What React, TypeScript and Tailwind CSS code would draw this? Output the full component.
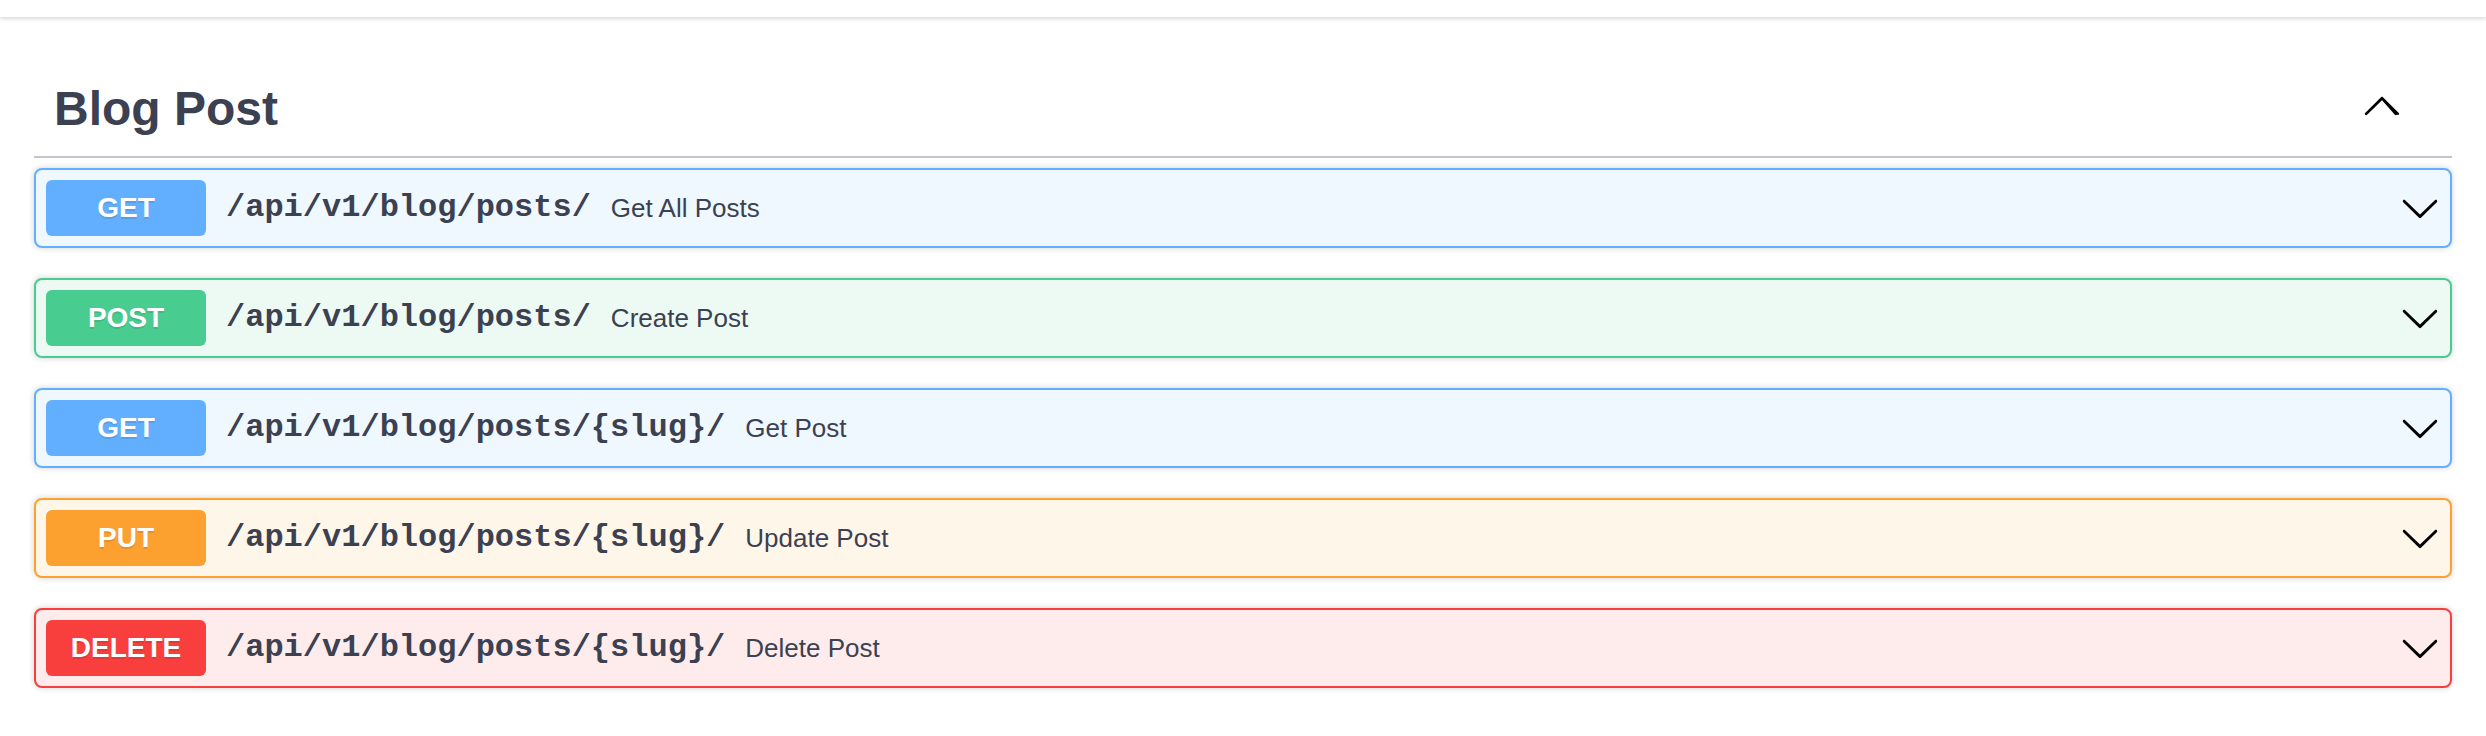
import React from "react";

type Op = {
  method: string;
  path: string;
  summary: string;
  card: string;
  badge: string;
};

const ops: Op[] = [
  { method: "GET", path: "/api/v1/blog/posts/", summary: "Get All Posts", card: "bg-[#eff7ff] border-[#61affe]", badge: "bg-[#61affe]" },
  { method: "POST", path: "/api/v1/blog/posts/", summary: "Create Post", card: "bg-[#edfaf4] border-[#49cc90]", badge: "bg-[#49cc90]" },
  { method: "GET", path: "/api/v1/blog/posts/{slug}/", summary: "Get Post", card: "bg-[#eff7ff] border-[#61affe]", badge: "bg-[#61affe]" },
  { method: "PUT", path: "/api/v1/blog/posts/{slug}/", summary: "Update Post", card: "bg-[#fff6ea] border-[#fca130]", badge: "bg-[#fca130]" },
  { method: "DELETE", path: "/api/v1/blog/posts/{slug}/", summary: "Delete Post", card: "bg-[#feecec] border-[#f93e3e]", badge: "bg-[#f93e3e]" },
];

function ArrowDown() {
  return (
    <svg width="40" height="40" viewBox="0 0 20 20" className="shrink-0">
      <path
        fill="#000"
        d="M17.418 6.109c.272-.268.709-.268.979 0s.271.701 0 .969l-7.908 7.83c-.27.268-.707.268-.979 0l-7.908-7.83c-.27-.268-.27-.701 0-.969.271-.268.709-.268.979 0L10 13.25l7.418-7.141z"
      />
    </svg>
  );
}

function ArrowUp() {
  return (
    <svg width="40" height="40" viewBox="0 0 20 20" className="shrink-0">
      <path
        fill="#000"
        d="M17.418 14.908c-.272.268-.709.268-.979 0L10 7.665 2.561 14.908c-.271.268-.709.268-.979 0-.27-.268-.27-.701 0-.969l7.908-7.83c.27-.268.707-.268.979 0l7.908 7.83c.27.268.27.701 0 .969z"
      />
    </svg>
  );
}

export default function App() {
  return (
    <div className="min-h-[736px] bg-white text-[#3b4151] font-['Liberation_Sans',Arial,sans-serif]">
      <div className="h-[17px] bg-white shadow-[0_2px_4px_0_rgba(0,0,0,0.15)]" />
      <div className="px-[34px] mt-[44px]">
        <div className="flex items-center pl-[20px] pr-[40px] py-[20px] border-b-2 border-[#c4c6cb]">
          <h3 className="flex-1 h-[55px] leading-[55px] text-[48px] font-bold text-[#3b4151]">Blog Post</h3>
          <div className="px-[10px] flex items-center mt-[-8px]">
            <ArrowUp />
          </div>
        </div>
        <div className="mt-[10px] flex flex-col gap-[30px]">
          {ops.map((op, i) => (
            <div
              key={i}
              className={`flex items-center border-2 rounded-[8px] p-[10px] shadow-[0_0_6px_rgba(0,0,0,0.19)] ${op.card}`}
            >
              <div
                className={`w-[160px] h-[56px] shrink-0 rounded-[6px] flex items-center justify-center text-white text-[28px] font-bold [text-shadow:0_2px_0_rgba(0,0,0,0.1)] ${op.badge}`}
              >
                {op.method}
              </div>
              <span className="px-[20px] font-['Liberation_Mono','Courier_New',monospace] font-bold text-[32px] text-[#3b4151]">
                {op.path}
              </span>
              <span className="flex-1 text-[26px] text-[#3b4151]">{op.summary}</span>
              <ArrowDown />
            </div>
          ))}
        </div>
      </div>
    </div>
  );
}
